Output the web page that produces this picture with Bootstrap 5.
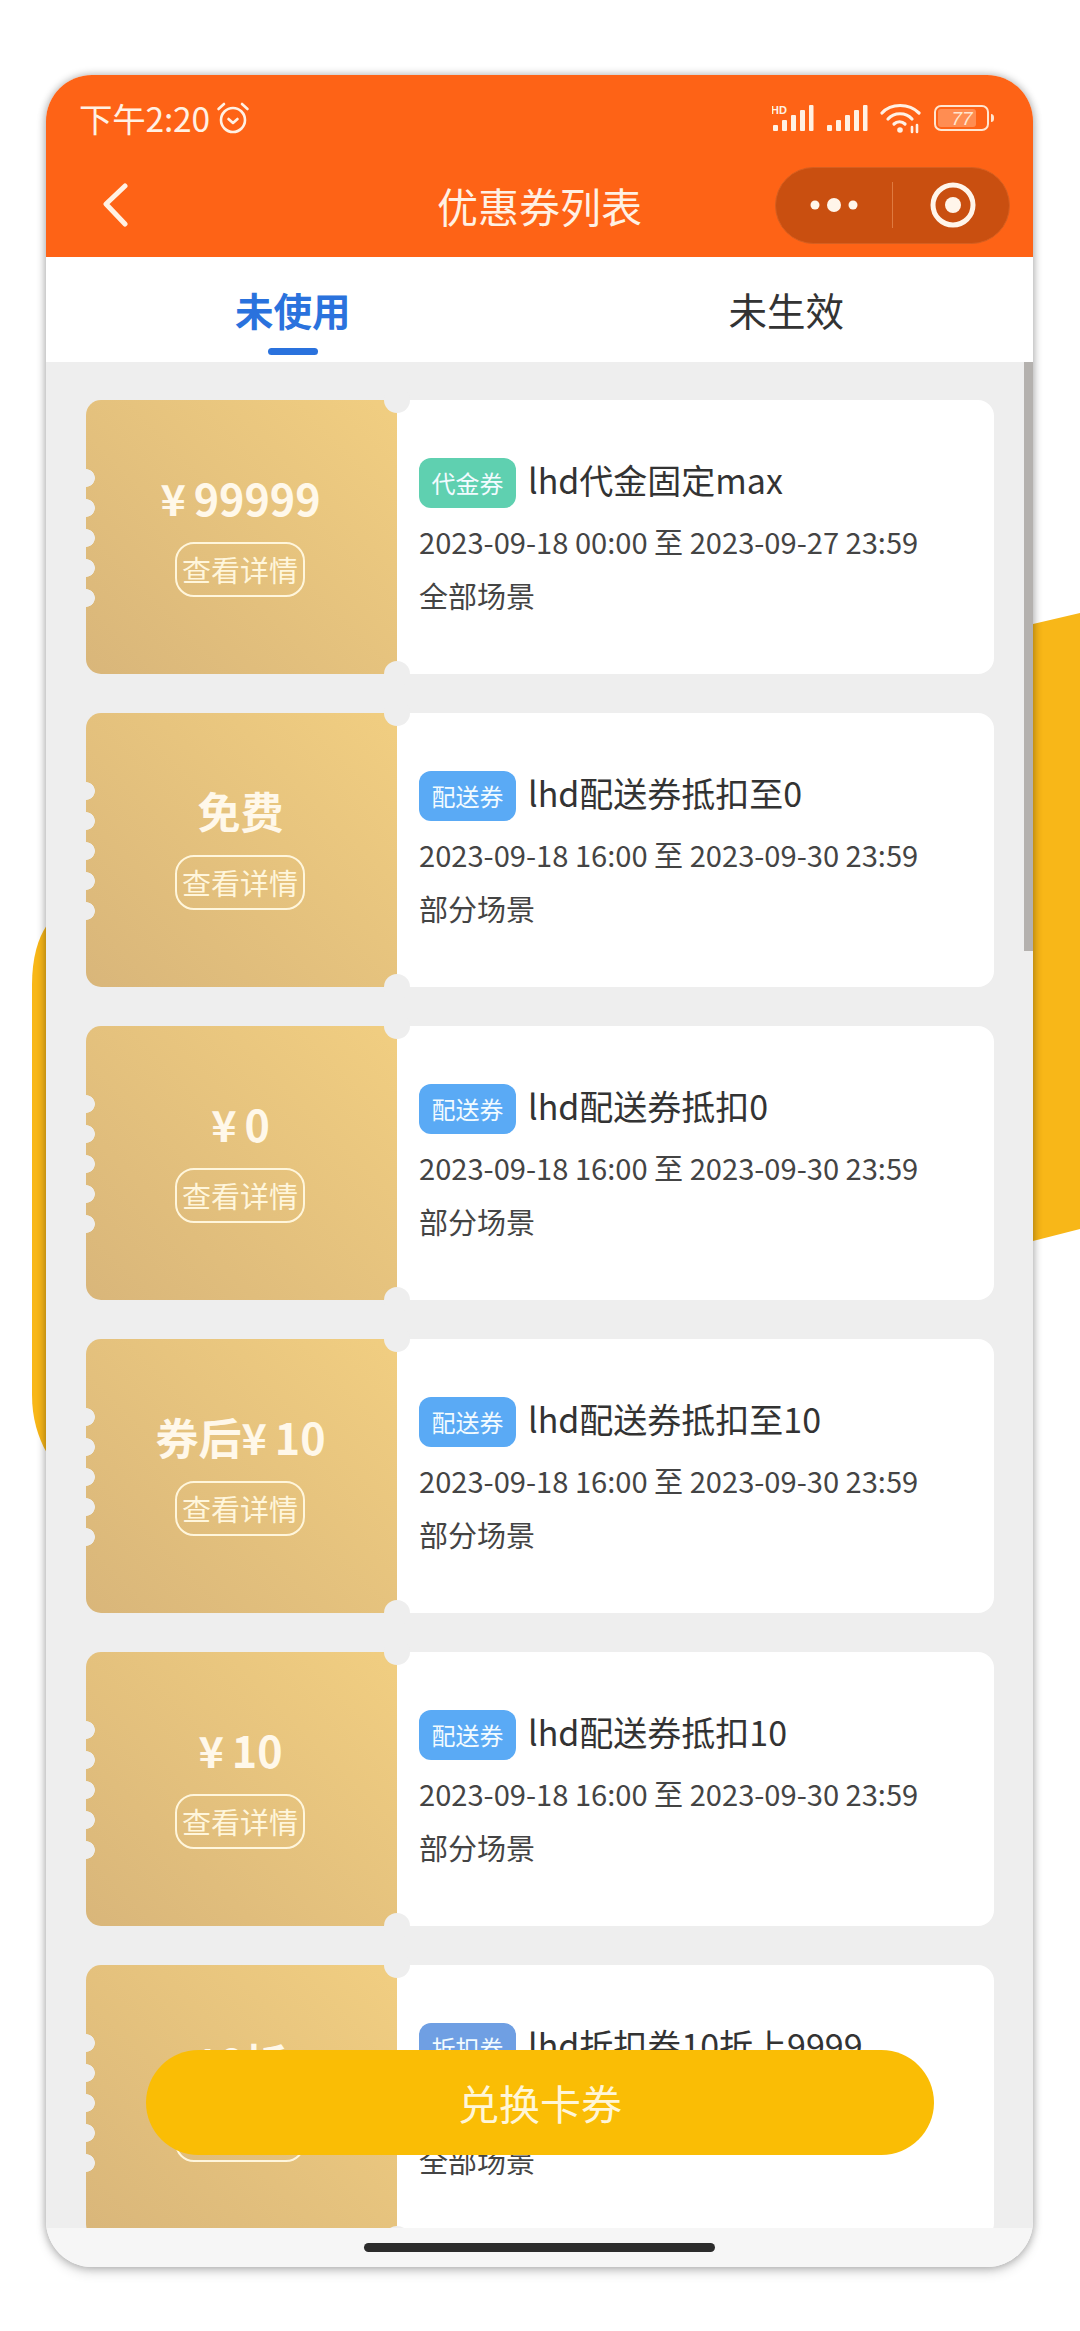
<!DOCTYPE html>
<html lang="zh-CN">
<head>
<meta charset="utf-8">
<title>优惠券列表</title>
<link rel="stylesheet" href="https://cdn.jsdelivr.net/npm/bootstrap@5.3.0/dist/css/bootstrap.min.css">
<style>
html,body{margin:0;height:2331px;background:#fff;overflow:hidden}
body{font-family:"Noto Sans CJK SC","Noto Sans",sans-serif;color:#333}
.stage{position:relative;width:1080px;height:2331px;padding:75px 47px 64px 46px}
.decor{position:absolute;left:0;top:0;width:1080px;height:2331px}
.phone{position:relative;height:100%;border-radius:46px;overflow:hidden;background:#fff;box-shadow:0 0 9px rgba(0,0,0,.32),0 6px 12px rgba(0,0,0,.12)}
.topbar{height:182px;background:#fe6316;color:#fff1e4}
.statusrow{height:90px;padding:0 38px 4px 33px}
.clock{font-size:33.5px;line-height:40px;letter-spacing:-.2px}
.alarmico{margin-left:-2px}
.statusico{margin-left:12px}
.navrow{height:80px}
.navside{width:258px;flex:none}
.backico{margin-left:55px}
.navtitle{font-size:41px;line-height:56px}
.capsule{width:235px;height:77px;margin-right:23px;border-radius:39px;background:#c94f10;border:1px solid #d65f20}
.capdots{width:116px}
.capsep{width:1px;height:46px;background:#df7a40}
.caprec{padding-left:4px}
.tabbar{height:105px;background:#fff}
.tabitem{position:relative;font-size:38.5px;line-height:104px;text-align:center;color:#333}
.tabactive{color:#2a72dd;font-weight:700}
.tabline{position:absolute;left:50%;top:91px;width:50px;height:7px;margin-left:-25px;border-radius:4px;background:#2a72dd}
.listarea{position:relative;height:1866px;background:#eee;overflow:hidden;padding:38px 39px 0 40px}
.scrollthumb{position:absolute;right:0;top:0;width:9px;height:589px;background:#b4b1ae}
.ticket{position:relative;height:274px;margin-bottom:39px;flex:none;width:908px}
.ticket::before,.ticket::after{content:"";position:absolute;left:298px;width:26px;height:26px;border-radius:50%;background:#eee;z-index:2}
.ticket::before{top:-13px}
.ticket::after{bottom:-13px}
.goldpart{position:relative;width:311px;flex:none;padding-top:68px;border-radius:15px 0 0 15px;background:linear-gradient(45deg,#d9b67a,#f1ce81);color:#fff;overflow:hidden}
.scallops{position:absolute;left:0;top:63px;width:10px;height:150px;background:radial-gradient(circle at 0 50%,#eee 8.5px,transparent 9.2px) 0 0/100% 30px repeat-y}
.amount{font-size:43px;line-height:58px;font-weight:700;white-space:nowrap;color:#fff8ea;margin-left:-2px}
.yenmark{margin-right:8px}
.detailbtn{width:130px;height:55px;margin-top:16px;margin-left:-3px;border:2px solid #fff6dc;border-radius:19px;font-size:29px;line-height:50px;color:#fff6dc;white-space:nowrap}
.infopart{flex:1;background:#fff;border-radius:0 16px 16px 0;padding:58px 0 0 22px;min-width:0}
.tagline{height:50px}
.cptag{width:97px;height:50px;border-radius:12px;font-size:24px;line-height:50px;text-align:center;color:#f2fbff;flex:none;margin-right:12px}
.tagteal{background:#5fd0b0}
.tagblue{background:#5aaaf5}
.tagslate{background:#6f9fe3}
.cptitle{font-size:34px;line-height:44px;color:#333;margin-bottom:7px;white-space:nowrap}
.cpdate{font-size:29.1px;line-height:40px;margin-top:13px;color:#444;white-space:nowrap}
.cpscene{font-size:29px;line-height:40px;margin-top:14px;color:#444}
.homestrip{height:39px;background:#f6f6f6}
.homebar{width:351px;height:9px;margin-top:15px;border-radius:5px;background:#2c2c2c}
.exchangebtn{position:absolute;left:100px;top:1975px;width:788px;height:105px;border:0;border-radius:53px;background:#fabd05;color:#fff6d8;font-size:41px;line-height:105px;padding:0}
.exchangebtn:hover{background:#fabd05;color:#fff6d8}
</style>
</head>
<body>
<div class="stage">
  <svg class="decor" viewBox="0 0 1080 2331" aria-hidden="true">
    <path d="M1033 624L1080 613V1229L1033 1241Z" fill="#f8b718"/>
    <path d="M47 925C38 938 32 958 32 985V1395C32 1418 38 1438 47 1453Z" fill="#f8b718"/>
  </svg>
  <div class="phone d-flex flex-column">
    <div class="topbar flex-none">
      <div class="statusrow d-flex align-items-center justify-content-between">
        <div class="d-flex align-items-center gap-2">
          <span class="clock">下午2:20</span>
          <svg class="alarmico" width="34" height="34" viewBox="0 0 34 34" fill="none" stroke="#fff1e4" stroke-width="2.6" stroke-linecap="round" stroke-linejoin="round"><circle cx="17" cy="19" r="12"/><path d="M12.5 18l4.5 4 4.5-4"/><path d="M2.5 8L8 3M31.5 8L26 3"/></svg>
        </div>
        <div class="d-flex align-items-center">
          <svg width="42" height="28" viewBox="0 0 42 28" fill="#fff1e4"><rect x="1" y="21" width="5" height="6" rx="1"/><rect x="10" y="16" width="5" height="11" rx="1"/><rect x="19" y="11" width="5" height="16" rx="1"/><rect x="28" y="6" width="5" height="21" rx="1"/><rect x="37" y="1" width="4.5" height="26" rx="1"/><text x="-1" y="10" font-size="11" font-weight="700" font-family="Liberation Sans,sans-serif">HD</text></svg>
          <svg class="statusico" width="42" height="28" viewBox="0 0 42 28" fill="#fff1e4"><rect x="1" y="21" width="5" height="6" rx="1"/><rect x="10" y="16" width="5" height="11" rx="1"/><rect x="19" y="11" width="5" height="16" rx="1"/><rect x="28" y="6" width="5" height="21" rx="1"/><rect x="37" y="1" width="4.5" height="26" rx="1"/></svg>
          <svg class="statusico" width="42" height="32" viewBox="0 0 42 32" fill="none" stroke="#fff1e4" stroke-width="3.2" stroke-linecap="round"><path d="M2 11C11 1 29 1 39 11"/><path d="M8 17C14 10 26 10 32 17"/><path d="M14 22C17 19 22 19 25 22"/><circle cx="20" cy="28" r="2.8" fill="#fff1e4" stroke="none"/><path d="M32 25v5M37 23v7" stroke-width="2.6"/></svg>
          <svg class="statusico" width="61" height="26" viewBox="0 0 61 26"><rect x="1" y="1" width="53" height="24" rx="6" fill="none" stroke="#ffe6d0" stroke-width="2"/><rect x="4" y="4" width="38" height="18" rx="3" fill="#ff8d52"/><path d="M57 9c2 0 3 1 3 4s-1 4-3 4z" fill="#ffe6d0"/><text x="28" y="20" text-anchor="middle" font-size="19" fill="#ffe6d0" font-family="Liberation Sans,sans-serif" font-style="italic">77</text></svg>
        </div>
      </div>
      <div class="navrow d-flex align-items-center">
        <div class="navside d-flex align-items-center">
          <svg class="backico" width="28" height="44" viewBox="0 0 28 44" fill="none" stroke="#fff1e4" stroke-width="5" stroke-linecap="round" stroke-linejoin="round"><path d="M24 3L5 21l19 20"/></svg>
        </div>
        <div class="navtitle flex-grow-1 text-center">优惠券列表</div>
        <div class="navside d-flex justify-content-end">
          <div class="capsule d-flex align-items-center">
            <div class="capdots d-flex justify-content-center">
              <svg width="50" height="20" viewBox="0 0 50 20" fill="#fff5ea"><circle cx="6" cy="10" r="4.5"/><circle cx="25" cy="10" r="7"/><circle cx="44" cy="10" r="4.5"/></svg>
            </div>
            <div class="capsep"></div>
            <div class="caprec d-flex justify-content-center flex-grow-1">
              <svg width="46" height="46" viewBox="0 0 46 46"><circle cx="23" cy="23" r="20" fill="none" stroke="#fff5ea" stroke-width="5"/><circle cx="23" cy="23" r="8" fill="#fff5ea"/></svg>
            </div>
          </div>
        </div>
      </div>
    </div>
    <div class="tabbar row g-0 flex-none">
      <div class="col-6 tabitem tabactive">未使用<span class="tabline"></span></div>
      <div class="col-6 tabitem">未生效</div>
    </div>
    <div class="listarea flex-none">
      <div class="ticket d-flex">
        <div class="goldpart text-center d-flex flex-column align-items-center"><span class="scallops"></span><div class="amount"><span class="yenmark">¥</span>99999</div><div class="detailbtn">查看详情</div></div>
        <div class="infopart">
          <div class="tagline d-flex align-items-center"><span class="cptag tagteal">代金券</span><span class="cptitle">lhd代金固定max</span></div>
          <div class="cpdate">2023-09-18 00:00 至 2023-09-27 23:59</div>
          <div class="cpscene">全部场景</div>
        </div>
      </div>
      <div class="ticket d-flex">
        <div class="goldpart text-center d-flex flex-column align-items-center"><span class="scallops"></span><div class="amount">免费</div><div class="detailbtn">查看详情</div></div>
        <div class="infopart">
          <div class="tagline d-flex align-items-center"><span class="cptag tagblue">配送券</span><span class="cptitle">lhd配送券抵扣至0</span></div>
          <div class="cpdate">2023-09-18 16:00 至 2023-09-30 23:59</div>
          <div class="cpscene">部分场景</div>
        </div>
      </div>
      <div class="ticket d-flex">
        <div class="goldpart text-center d-flex flex-column align-items-center"><span class="scallops"></span><div class="amount"><span class="yenmark">¥</span>0</div><div class="detailbtn">查看详情</div></div>
        <div class="infopart">
          <div class="tagline d-flex align-items-center"><span class="cptag tagblue">配送券</span><span class="cptitle">lhd配送券抵扣0</span></div>
          <div class="cpdate">2023-09-18 16:00 至 2023-09-30 23:59</div>
          <div class="cpscene">部分场景</div>
        </div>
      </div>
      <div class="ticket d-flex">
        <div class="goldpart text-center d-flex flex-column align-items-center"><span class="scallops"></span><div class="amount">券后<span class="yenmark">¥</span>10</div><div class="detailbtn">查看详情</div></div>
        <div class="infopart">
          <div class="tagline d-flex align-items-center"><span class="cptag tagblue">配送券</span><span class="cptitle">lhd配送券抵扣至10</span></div>
          <div class="cpdate">2023-09-18 16:00 至 2023-09-30 23:59</div>
          <div class="cpscene">部分场景</div>
        </div>
      </div>
      <div class="ticket d-flex">
        <div class="goldpart text-center d-flex flex-column align-items-center"><span class="scallops"></span><div class="amount"><span class="yenmark">¥</span>10</div><div class="detailbtn">查看详情</div></div>
        <div class="infopart">
          <div class="tagline d-flex align-items-center"><span class="cptag tagblue">配送券</span><span class="cptitle">lhd配送券抵扣10</span></div>
          <div class="cpdate">2023-09-18 16:00 至 2023-09-30 23:59</div>
          <div class="cpscene">部分场景</div>
        </div>
      </div>
      <div class="ticket d-flex">
        <div class="goldpart text-center d-flex flex-column align-items-center"><span class="scallops"></span><div class="amount">10折</div><div class="detailbtn">查看详情</div></div>
        <div class="infopart">
          <div class="tagline d-flex align-items-center"><span class="cptag tagslate">折扣券</span><span class="cptitle">lhd折扣券10折上9999</span></div>
          <div class="cpdate">2023-09-18 00:00 至 2023-09-27 23:59</div>
          <div class="cpscene">全部场景</div>
        </div>
      </div>
      <div class="scrollthumb"></div>
    </div>
    <div class="homestrip d-flex justify-content-center flex-none"><div class="homebar"></div></div>
    <button type="button" class="btn exchangebtn">兑换卡券</button>
  </div>
</div>
<script src="https://cdn.jsdelivr.net/npm/bootstrap@5.3.0/dist/js/bootstrap.bundle.min.js"></script>
</body>
</html>
